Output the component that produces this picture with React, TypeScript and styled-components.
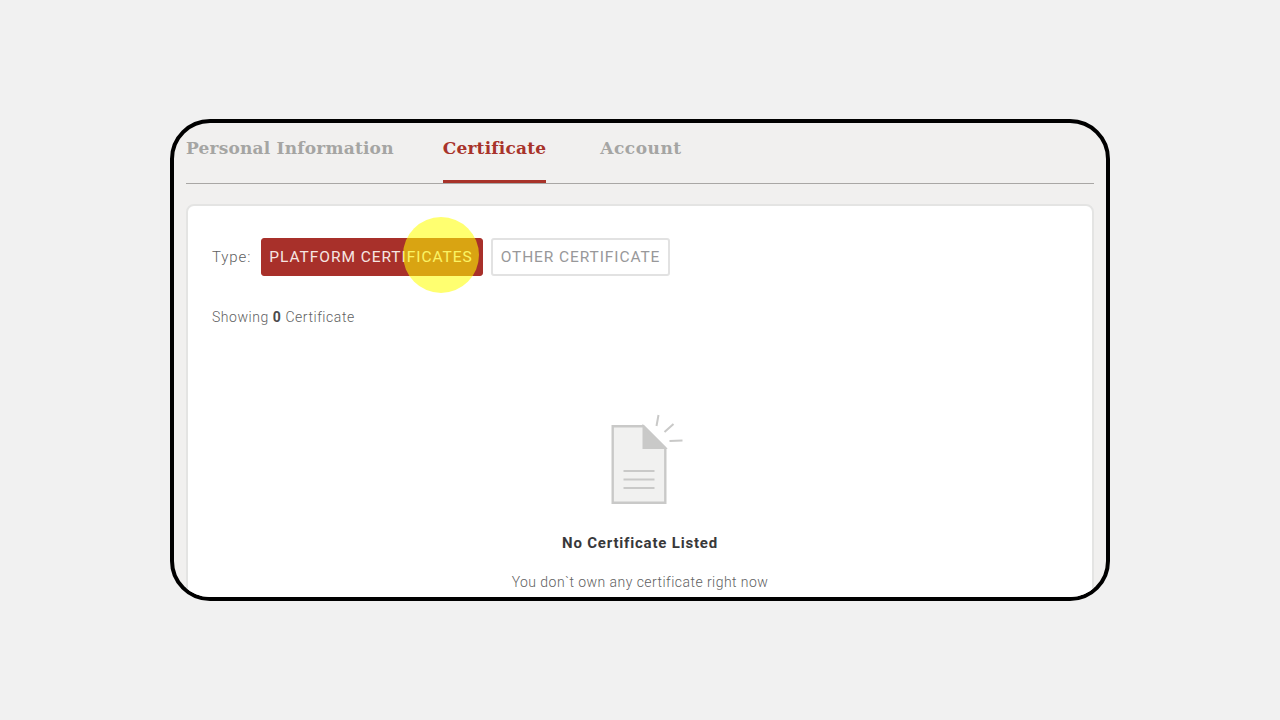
import React from 'react';
import styled, { createGlobalStyle } from 'styled-components';

const GlobalStyle = createGlobalStyle`
  html, body {
    margin: 0;
    padding: 0;
    height: 100%;
    background: #f1f1f1;
  }
  #root {
    height: 100%;
  }
  * {
    box-sizing: border-box;
  }
`;

const Page = styled.div`
  width: 1280px;
  height: 720px;
  display: flex;
  align-items: center;
  justify-content: center;
`;

const Frame = styled.div`
  width: 940px;
  height: 482px;
  border: 4px solid #000;
  border-radius: 40px;
  background: #f1f0ef;
  padding: 0 12px;
  overflow: hidden;
`;

const Tabs = styled.div`
  display: flex;
  gap: 49px;
  height: 61px;
  border-bottom: 1px solid #a9a7a5;
`;

const Tab = styled.div<{ $active?: boolean }>`
  height: 60px;
  padding-top: 13px;
  font-family: 'DejaVu Serif', serif;
  font-size: 17px;
  font-weight: 700;
  line-height: 24px;
  letter-spacing: 0.2px;
  color: ${(props) => (props.$active ? '#a8332a' : '#a5a5a3')};
  border-bottom: ${(props) => (props.$active ? '3px solid #a8332a' : 'none')};

  &:last-child {
    margin-left: 5px;
    letter-spacing: 0.5px;
  }
`;

const Card = styled.div`
  margin-top: 20px;
  height: 420px;
  background: #fff;
  border: 2px solid #e4e4e3;
  border-radius: 8px;
  padding: 31px 24px 0;
  font-family: 'Roboto', sans-serif;
`;

const TypeRow = styled.div`
  display: flex;
  align-items: center;
  height: 39px;
`;

const TypeLabel = styled.span`
  font-size: 15px;
  font-weight: 300;
  color: #5f5f62;
  letter-spacing: 0.9px;
  margin-right: 10px;
`;

const TypeWrap = styled.div`
  position: relative;
  display: flex;
  gap: 8px;
`;

const TypeButton = styled.div<{ $active?: boolean }>`
  height: 38px;
  display: flex;
  align-items: center;
  padding: ${(props) => (props.$active ? '0 9px 0 7px' : '0 8px')};
  border-radius: 3px;
  font-size: 15.5px;
  letter-spacing: ${(props) => (props.$active ? '0.95px' : '0.9px')};
  white-space: nowrap;
  background: ${(props) => (props.$active ? '#a8302a' : '#fff')};
  color: ${(props) => (props.$active ? '#f6e6e2' : '#98989a')};
  border: ${(props) => (props.$active ? '1px solid #a8302a' : '2px solid #e2e2e2')};
`;

const Highlight = styled.div`
  position: absolute;
  left: 142px;
  top: -21px;
  width: 76px;
  height: 76px;
  border-radius: 50%;
  background: rgba(255, 255, 0, 0.56);
`;

const Showing = styled.div`
  margin-top: 31px;
  font-size: 14px;
  font-weight: 300;
  line-height: 20px;
  letter-spacing: 0.55px;
  color: #5f5f62;

  b {
    color: #4a4a4c;
    font-weight: 700;
  }
`;

const Empty = styled.div`
  display: flex;
  flex-direction: column;
  align-items: center;
  margin-top: 87px;
`;

const EmptyIcon = styled.svg`
  display: block;
  width: 76px;
  height: 92px;
  margin-left: 13px;
`;

const EmptyTitle = styled.div`
  margin-top: 27px;
  font-size: 15px;
  font-weight: 700;
  line-height: 20px;
  letter-spacing: 0.8px;
  color: #38383a;
`;

const EmptyText = styled.div`
  margin-top: 19px;
  font-size: 14px;
  font-weight: 300;
  line-height: 20px;
  letter-spacing: 0.45px;
  color: #5f5f62;
`;

const App = () => {
  return (
    <Page>
      <GlobalStyle />
      <Frame>
        <Tabs>
          <Tab>Personal Information</Tab>
          <Tab $active>Certificate</Tab>
          <Tab>Account</Tab>
        </Tabs>
        <Card>
          <TypeRow>
            <TypeLabel>Type:</TypeLabel>
            <TypeWrap>
              <TypeButton $active>PLATFORM CERTIFICATES</TypeButton>
              <TypeButton>OTHER CERTIFICATE</TypeButton>
              <Highlight />
            </TypeWrap>
          </TypeRow>
          <Showing>
            Showing <b>0</b> Certificate
          </Showing>
          <Empty>
            <EmptyIcon viewBox="0 0 76 92" fill="none">
              <path d="M3.700 12.200H34.500L56.300 34V88.800H3.700Z" fill="#f1f1f0" stroke="#c9c9c8" strokeWidth="2.400" />
              <path d="M34.500 12.200L56.300 34H34.500Z" fill="#c9c9c8" stroke="#c9c9c8" strokeWidth="2" />
              <path d="M14.500 57H45.500M14.500 65.500H45.500M14.500 74H45.500" stroke="#c9c9c8" strokeWidth="2" />
              <path d="M49.500 1L47.500 12M64.500 10L55.500 18M73.500 26.500L60.500 27" stroke="#c9c9c8" strokeWidth="2" />
            </EmptyIcon>
            <EmptyTitle>No Certificate Listed</EmptyTitle>
            <EmptyText>You don`t own any certificate right now</EmptyText>
          </Empty>
        </Card>
      </Frame>
    </Page>
  );
};

export default App;
